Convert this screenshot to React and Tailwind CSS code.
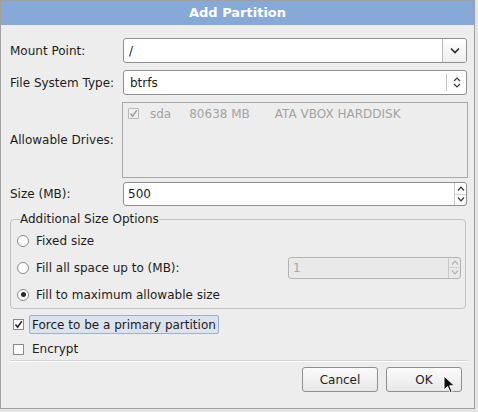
const font = { fontFamily: '"DejaVu Sans", "Liberation Sans", sans-serif' };

function ChevronDown() {
  return (
    <svg width="10" height="7" viewBox="0 0 10 7">
      <path d="M1 1.5 L5 5.5 L9 1.5" fill="none" stroke="#2e2e2e" strokeWidth="1.6" />
    </svg>
  );
}

function UpDown({ color = '#3a3a3a' }) {
  return (
    <svg width="8" height="13" viewBox="0 0 8 13">
      <path d="M1 5 L4 2 L7 5" fill="none" stroke={color} strokeWidth="1.2" />
      <path d="M1 8 L4 11 L7 8" fill="none" stroke={color} strokeWidth="1.2" />
    </svg>
  );
}

function SpinButtons({ disabled }) {
  const c = disabled ? '#b4b4b4' : '#333';
  return (
    <div className="flex flex-col w-[12px] h-full border-l border-[#c8c8c8]">
      <div className="flex-1 flex items-center justify-center border-b border-[#d4d4d4]">
        <svg width="8" height="5" viewBox="0 0 8 5">
          <path d="M1 4.5 L4 1.2 L7 4.5" fill="none" stroke={c} strokeWidth="1.2" />
        </svg>
      </div>
      <div className="flex-1 flex items-center justify-center">
        <svg width="8" height="5" viewBox="0 0 8 5">
          <path d="M1 0.5 L4 3.8 L7 0.5" fill="none" stroke={c} strokeWidth="1.2" />
        </svg>
      </div>
    </div>
  );
}

function Check({ color = '#222' }) {
  return (
    <svg width="9" height="9" viewBox="0 0 9 9">
      <path d="M1.5 4.5 L3.6 7.2 L7.8 1.2" fill="none" stroke={color} strokeWidth="1.5" />
    </svg>
  );
}

function Radio({ checked }) {
  return (
    <div className="w-[12px] h-[12px] rounded-full border border-[#8a8a8a] bg-white flex items-center justify-center shrink-0">
      {checked && <div className="w-[5px] h-[5px] rounded-full bg-[#2a2a2a]" />}
    </div>
  );
}

function Button({ children }) {
  return (
    <div className="w-[76px] h-[25px] rounded-[3px] border border-[#8e8e8e] bg-gradient-to-b from-[#fbfbfb] to-[#e8e8e8] flex items-center justify-center text-[12px] text-[#1e1e1e]">
      {children}
    </div>
  );
}

export default function App() {
  return (
    <div className="w-[478px] h-[412px] bg-[#e4e4e4] relative overflow-hidden" style={font}>
      <div className="w-[475px] h-[409px] border border-[#a0a0a0] bg-[#ededed] flex flex-col text-[12px] text-[#1c1c1c] whitespace-nowrap">
        {/* Title */}
        <div className="h-[24px] bg-[#87a9d8] flex items-center justify-center text-white font-bold text-[13px]">
          Add Partition
        </div>

        <div className="pl-[9px] pr-[7px] flex flex-col">
          {/* Mount point */}
          <div className="mt-[13px] h-[25px] flex items-center">
            <div className="w-[113px]">Mount Point:</div>
            <div className="flex-1 h-full bg-white border border-[#8f8f8f] rounded-[3px] flex items-stretch">
              <div className="flex-1 flex items-center pl-[5px]">/</div>
              <div className="w-[24px] border-l border-[#b8b8b8] flex items-center justify-center bg-gradient-to-b from-white to-[#efefef] rounded-r-[3px]">
                <ChevronDown />
              </div>
            </div>
          </div>

          {/* File system type */}
          <div className="mt-[7px] h-[25px] flex items-center">
            <div className="w-[113px]">File System Type:</div>
            <div className="flex-1 h-full bg-white border border-[#8f8f8f] rounded-[3px] flex items-stretch">
              <div className="flex-1 flex items-center pl-[6px]">btrfs</div>
              <div className="w-[20px] my-[3px] border-l border-[#c4c4c4] flex items-center justify-center">
                <UpDown />
              </div>
            </div>
          </div>

          {/* Allowable drives */}
          <div className="mt-[7px] h-[76px] flex items-center">
            <div className="w-[112px]">Allowable Drives:</div>
            <div className="flex-1 h-full border border-[#a8a8a8] bg-[#ededed] mr-[-1px] pl-[5px] pt-[2px]">
              <div className="flex items-center h-[17px] text-[#a3a3a3]">
                <div className="w-[11px] h-[11px] border border-[#b8b8b8] bg-[#f0f0f0] rounded-[1px] flex items-center justify-center">
                  <Check color="#a0a0a0" />
                </div>
                <span className="ml-[11px]">sda</span>
                <span className="ml-[18px]">80638 MB</span>
                <span className="ml-[25px]">ATA VBOX HARDDISK</span>
              </div>
            </div>
          </div>

          {/* Size */}
          <div className="mt-[4px] h-[24px] flex items-center">
            <div className="w-[113px]">Size (MB):</div>
            <div className="flex-1 h-full bg-white border border-[#8f8f8f] rounded-[3px] flex items-stretch">
              <div className="flex-1 flex items-center pl-[4px]">500</div>
              <SpinButtons />
            </div>
          </div>

          {/* Additional size options */}
          <fieldset className="mt-[5px] mr-[1px] border border-[#c2c2c2] rounded-[4px] pl-[6px] pr-[4px]">
            <legend className="ml-[3px] leading-[17px]">Additional Size Options</legend>
            <div className="h-[26px] flex items-center">
              <Radio />
              <span className="ml-[7px]">Fixed size</span>
            </div>
            <div className="h-[27px] flex items-center">
              <Radio />
              <span className="ml-[7px]">Fill all space up to (MB):</span>
              <div className="ml-auto w-[173px] h-[22px] border border-[#b4b4b4] rounded-[3px] bg-[#e9e9e9] flex items-stretch">
                <div className="flex-1 flex items-center pl-[4px] text-[#a8a8a8]">1</div>
                <SpinButtons disabled />
              </div>
            </div>
            <div className="h-[27px] flex items-center">
              <Radio checked />
              <span className="ml-[7px]">Fill to maximum allowable size</span>
            </div>
          </fieldset>

          {/* Force primary */}
          <div className="mt-[6px] h-[19px] flex items-center">
            <div className="ml-[3px] w-[11px] h-[11px] border border-[#8a8a8a] bg-white flex items-center justify-center">
              <Check />
            </div>
            <div className="ml-[5px] h-[19px] px-[2px] border border-[#9fb0ca] rounded-[2px] bg-[#dde3ed] flex items-center">
              Force to be a primary partition
            </div>
          </div>

          {/* Encrypt */}
          <div className="mt-[6px] h-[18px] flex items-center">
            <div className="ml-[3px] w-[11px] h-[11px] border border-[#8a8a8a] bg-white" />
            <span className="ml-[8px]">Encrypt</span>
          </div>

          <div className="mt-[2px] mr-[-1px] h-[2px] border-t border-[#d2d2d2] border-b border-b-white" />

          {/* Buttons */}
          <div className="mt-[5px] flex justify-end gap-[8px] pr-[5px]">
            <Button>Cancel</Button>
            <Button>OK</Button>
          </div>
        </div>
      </div>

      {/* mouse pointer */}
      <svg className="absolute left-[443px] top-[375px]" width="14" height="19" viewBox="0 0 14 19">
        <path d="M1 1 L1 15 L4.5 11.5 L7.2 17.5 L9.2 16.6 L6.6 10.8 L11.5 10.8 Z" fill="#111" stroke="#fff" strokeWidth="1" />
      </svg>
    </div>
  );
}
